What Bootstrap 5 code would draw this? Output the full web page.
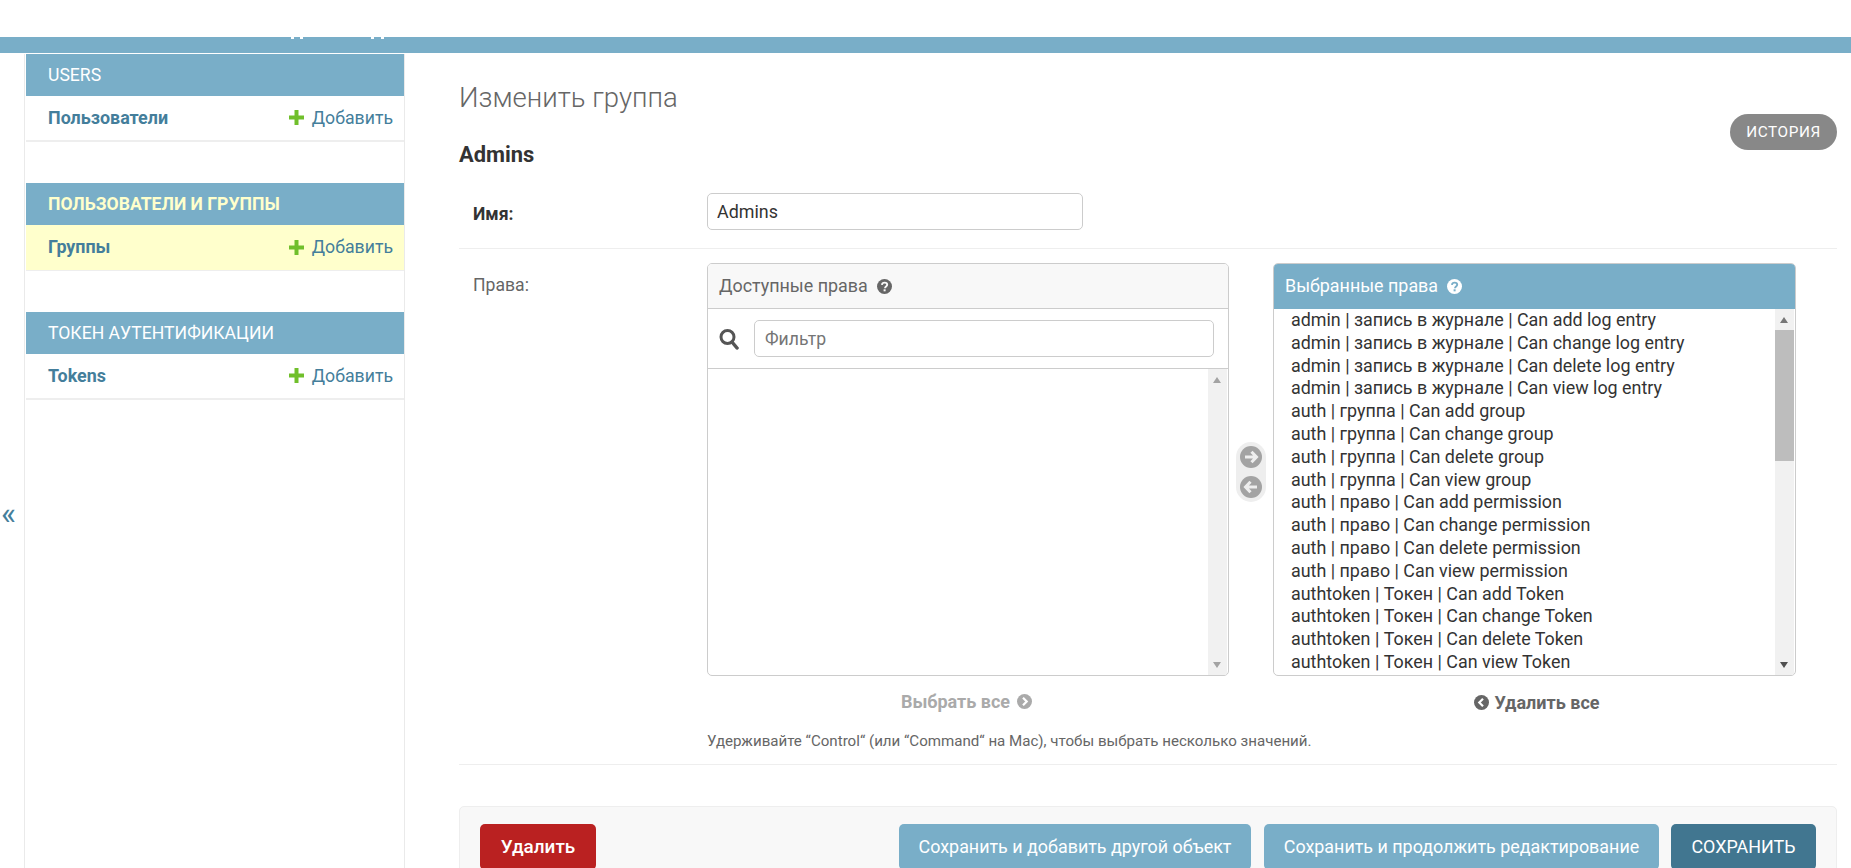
<!DOCTYPE html>
<html lang="ru">
<head>
<meta charset="UTF-8" />
<meta name="viewport" content="width=device-width, initial-scale=1" />
<title>Изменить группа</title>
<link href="https://cdn.jsdelivr.net/npm/bootstrap@5.3.0/dist/css/bootstrap.min.css" rel="stylesheet" />
<style>
  html, body { height: 868px; overflow: hidden; }
  body { font-family: Roboto, "Liberation Sans", sans-serif; color: #333; font-size: 17.6px; }
  .top-white { height: 37px; }
  .top-bar { height: 16px; background: #79aec8; position: relative; }
  .top-tick { position: absolute; top: 0; height: 2px; width: 3px; background: #fff; }
  .page-wrap { margin-top: 1px; height: 814px; }
  .toggle-col { width: 24px; color: #447e9b; font-size: 32px; line-height: 1; padding-top: 443px; padding-left: 1px; }
  .side-col { width: 381px; border-left: 1px solid #eaeaea; border-right: 1px solid #eaeaea; padding-left: 1px; }
  .app-block { margin-bottom: 41px; }
  .app-head { height: 42px; background: #79aec8; color: #fff; font-size: 17.6px; padding: 0 22px; line-height: 43px; }
  .app-head.is-active { color: #ffc; font-weight: 700; }
  .app-row { height: 46px; padding: 0 11px 0 22px; border-bottom: 2px solid #eee; }
  .app-row.is-active { background: #ffc; border-bottom-width: 1px; }
  .app-link { color: #447e9b; font-weight: 700; font-size: 17.9px; text-decoration: none; }
  .add-link { color: #447e9b; font-size: 17.7px; text-decoration: none; }
  .main-col { margin-left: 54px; width: 1378px; position: relative; }
  .page-title { font-weight: 300; font-size: 27.5px; color: #666; line-height: 32px; margin: 28px 0 0 0; }
  .hist-btn { position: absolute; right: 0; top: 60px; width: 107px; height: 36px; border-radius: 18px; background: #888; color: #fff; font-size: 15.3px; letter-spacing: .6px; line-height: 36px; text-align: center; text-decoration: none; }
  .obj-title { font-weight: 700; font-size: 21.9px; color: #333; line-height: 26px; margin: 28px 0 0 0; }
  .form-line { border-bottom: 1px solid #eee; padding-left: 14px; }
  .name-line { height: 81px; padding-top: 25px; }
  .name-label { width: 234px; font-weight: 700; color: #333; padding-top: 8px; }
  .name-input { width: 376px; height: 37px; border: 1px solid #ccc; border-radius: 5px; font-size: 17.9px; color: #333; padding: 0 9px; font-family: inherit; }
  .perm-line { height: 516px; padding-top: 14px; }
  .perm-label { width: 234px; color: #666; padding-top: 9px; }
  .sel-box { width: 522px; }
  .sel-box.is-right { width: 523px; }
  .sel-frame { border: 1px solid #ccc; border-radius: 5px; height: 413px; overflow: hidden; display: flex; flex-direction: column; }
  .sel-head { height: 45px; flex: none; padding: 0 11px; background: #f8f8f8; color: #666; font-size: 17.9px; border-bottom: 1px solid #ccc; gap: 9px; }
  .sel-head.is-chosen { background: #79aec8; color: #fff; border-bottom: 0; }
  .filter-row { height: 60px; flex: none; border-bottom: 1px solid #ccc; padding: 0 14px 0 11px; gap: 15px; }
  .filter-input { height: 37px; border: 1px solid #ccc; border-radius: 5px; flex: 1; padding: 0 10px; font-size: 17.6px; font-family: inherit; color: #333; }
  .filter-input::placeholder { color: #757575; }
  .opt-area { flex: 1; min-height: 0; }
  .opt-list { flex: 1; padding: 0 0 0 17px; font-size: 17.9px; line-height: 22.8px; color: #333; white-space: nowrap; }
  .fake-scroll { width: 19px; background: #f1f1f1; margin-right: 1px; position: relative; }
  .fake-thumb { position: absolute; left: 0; right: 0; top: 21px; height: 131px; background: #bdbdbd; }
  .arr-up, .arr-down { position: absolute; left: 5px; width: 0; height: 0; border-left: 4.5px solid transparent; border-right: 4.5px solid transparent; }
  .arr-up { top: 8px; border-bottom: 6px solid #a3a3a3; }
  .arr-down { bottom: 7px; border-top: 6px solid #a3a3a3; }
  .is-chosen-list .arr-up { border-bottom-color: #777; }
  .is-chosen-list .arr-down { border-top-color: #505050; }
  .mid-col { width: 44px; }
  .arrow-pill { width: 30px; height: 60px; background: #eee; border-radius: 15px; margin-top: 179px; margin-left: -1px; gap: 8px; }
  .all-link { font-weight: 700; font-size: 18px; text-decoration: none; height: 50px; }
  .all-link.is-off { color: #aaa; gap: 7px; padding-right: 3px; }
  .all-link.is-on { color: #666; gap: 5px; padding-left: 5px; padding-top: 2px; }
  .help-txt { font-size: 15.1px; color: #666; margin-top: 5px; line-height: 20px; margin-left: 234px; }
  .submit-box { margin-top: 41px; height: 90px; background: #f8f8f8; border: 1px solid #eee; border-radius: 5px; padding: 17px 20px 0 20px; }
  .sub-btn { height: 46px; border: 0; border-radius: 5px; color: #fff; font-size: 17.9px; padding: 0; background: #79aec8; }
  .sub-btn:hover { color: #fff; background: #79aec8; }
  .btn-del { width: 116px; background: #ba2121; font-weight: 500; font-size: 18.9px; }
  .btn-del:hover { background: #ba2121; }
  .btn-more { width: 352px; margin-right: 1px; }
  .btn-cont { width: 395px; }
  .btn-save { width: 145px; background: #417690; }
  .btn-save:hover { background: #417690; }
</style>
</head>
<body>

<div class="top-white"></div>
<div class="top-bar">
  <span class="top-tick" style="left:291px"></span>
  <span class="top-tick" style="left:300px"></span>
  <span class="top-tick" style="left:371px"></span>
  <span class="top-tick" style="left:381px"></span>
</div>

<div class="page-wrap d-flex">
  <div class="toggle-col">«</div>

  <!-- Боковая панель -->
  <div class="side-col flex-shrink-0">
    <div class="app-block">
      <div class="app-head">USERS</div>
      <div class="app-row d-flex justify-content-between align-items-center">
        <a href="#" class="app-link">Пользователи</a>
        <a href="#" class="add-link d-flex align-items-center gap-2"><svg width="15" height="15" viewBox="0 0 15 15"><path d="M5.5 0h4v5.5H15v4H9.500V15h-4V9.500H0v-4h5.500z" fill="#70bf2b"/></svg>Добавить</a>
      </div>
    </div>
    <div class="app-block">
      <div class="app-head is-active">ПОЛЬЗОВАТЕЛИ И ГРУППЫ</div>
      <div class="app-row is-active d-flex justify-content-between align-items-center">
        <a href="#" class="app-link">Группы</a>
        <a href="#" class="add-link d-flex align-items-center gap-2"><svg width="15" height="15" viewBox="0 0 15 15"><path d="M5.5 0h4v5.5H15v4H9.500V15h-4V9.500H0v-4h5.500z" fill="#70bf2b"/></svg>Добавить</a>
      </div>
    </div>
    <div class="app-block">
      <div class="app-head">ТОКЕН АУТЕНТИФИКАЦИИ</div>
      <div class="app-row d-flex justify-content-between align-items-center">
        <a href="#" class="app-link">Tokens</a>
        <a href="#" class="add-link d-flex align-items-center gap-2"><svg width="15" height="15" viewBox="0 0 15 15"><path d="M5.5 0h4v5.5H15v4H9.500V15h-4V9.500H0v-4h5.500z" fill="#70bf2b"/></svg>Добавить</a>
      </div>
    </div>
  </div>

  <!-- Форма -->
  <div class="main-col">
    <div class="page-title">Изменить группа</div>
    <a href="#" class="hist-btn">ИСТОРИЯ</a>
    <div class="obj-title">Admins</div>

    <div class="form-line name-line d-flex">
      <div class="name-label">Имя:</div>
      <input type="text" class="name-input" value="Admins" />
    </div>

    <div class="form-line perm-line">
      <div class="d-flex">
        <div class="perm-label">Права:</div>

        <div class="sel-box">
          <div class="sel-frame">
            <div class="sel-head d-flex align-items-center">Доступные права
              <svg width="15" height="15" viewBox="0 0 15 15"><circle cx="7.500" cy="7.500" r="7.500" fill="#666"/><path d="M4.900 5.800c.2-1.500 1.300-2.200 2.700-2.200 1.500 0 2.600.9 2.600 2.100 0 1.800-2.200 1.900-2.200 3.500" fill="none" stroke="#f8f8f8" stroke-width="1.900"/><rect x="6.600" y="10.300" width="2" height="2" fill="#f8f8f8"/></svg>
            </div>
            <div class="filter-row d-flex align-items-center">
              <svg width="20" height="22" viewBox="0 0 20 22"><circle cx="8.500" cy="9" r="6.500" fill="none" stroke="#555" stroke-width="3"/><path d="M13 14l5 6" stroke="#555" stroke-width="3.500" stroke-linecap="round"/></svg>
              <input type="text" class="filter-input" placeholder="Фильтр" />
            </div>
            <div class="opt-area d-flex">
              <div class="opt-list"></div>
              <div class="fake-scroll"><span class="arr-up"></span><span class="arr-down"></span></div>
            </div>
          </div>
          <a href="#" class="all-link is-off d-flex align-items-center justify-content-center">Выбрать все
            <svg width="15" height="15" viewBox="0 0 15 15"><circle cx="7.500" cy="7.500" r="7.500" fill="#aaa"/><path d="M6 3.800l3.700 3.700L6 11.200" fill="none" stroke="#fff" stroke-width="2.200"/></svg>
          </a>
        </div>

        <div class="mid-col d-flex justify-content-center flex-shrink-0">
          <div class="arrow-pill d-flex flex-column align-items-center justify-content-center">
            <svg width="22" height="22" viewBox="0 0 22 22"><circle cx="11" cy="11" r="11" fill="#a3a3a3"/><path d="M5 11h11M11.500 5.800L16.500 11l-5 5.200" fill="none" stroke="#eee" stroke-width="3"/></svg>
            <svg width="22" height="22" viewBox="0 0 22 22"><circle cx="11" cy="11" r="11" fill="#a3a3a3"/><path d="M17 11H6M10.500 5.800L5.500 11l5 5.200" fill="none" stroke="#eee" stroke-width="3"/></svg>
          </div>
        </div>

        <div class="sel-box is-right">
          <div class="sel-frame">
            <div class="sel-head is-chosen d-flex align-items-center">Выбранные права
              <svg width="15" height="15" viewBox="0 0 15 15"><circle cx="7.500" cy="7.500" r="7.500" fill="#fff"/><path d="M4.900 5.800c.2-1.500 1.300-2.200 2.700-2.200 1.500 0 2.600.9 2.600 2.100 0 1.800-2.200 1.900-2.200 3.500" fill="none" stroke="#79aec8" stroke-width="1.900"/><rect x="6.600" y="10.300" width="2" height="2" fill="#79aec8"/></svg>
            </div>
            <div class="opt-area d-flex is-chosen-list">
              <div class="opt-list" id="chosen-list"></div>
              <div class="fake-scroll"><span class="arr-up"></span><span class="fake-thumb"></span><span class="arr-down"></span></div>
            </div>
          </div>
          <a href="#" class="all-link is-on d-flex align-items-center justify-content-center">
            <svg width="15" height="15" viewBox="0 0 15 15"><circle cx="7.500" cy="7.500" r="7.500" fill="#666"/><path d="M9 3.800L5.300 7.500 9 11.200" fill="none" stroke="#fff" stroke-width="2.200"/></svg>
            Удалить все
          </a>
        </div>
      </div>
      <div class="help-txt">Удерживайте “Control“ (или “Command“ на Mac), чтобы выбрать несколько значений.</div>
    </div>

    <div class="submit-box d-flex justify-content-between">
      <a href="#" class="btn sub-btn btn-del d-flex align-items-center justify-content-center">Удалить</a>
      <div class="d-flex" style="gap:12px">
        <button type="button" class="btn sub-btn btn-more">Сохранить и добавить другой объект</button>
        <button type="button" class="btn sub-btn btn-cont">Сохранить и продолжить редактирование</button>
        <button type="button" class="btn sub-btn btn-save">СОХРАНИТЬ</button>
      </div>
    </div>
  </div>
</div>

<script>
  const perms = [
    "admin | запись в журнале | Can add log entry",
    "admin | запись в журнале | Can change log entry",
    "admin | запись в журнале | Can delete log entry",
    "admin | запись в журнале | Can view log entry",
    "auth | группа | Can add group",
    "auth | группа | Can change group",
    "auth | группа | Can delete group",
    "auth | группа | Can view group",
    "auth | право | Can add permission",
    "auth | право | Can change permission",
    "auth | право | Can delete permission",
    "auth | право | Can view permission",
    "authtoken | Токен | Can add Token",
    "authtoken | Токен | Can change Token",
    "authtoken | Токен | Can delete Token",
    "authtoken | Токен | Can view Token"
  ];
  const chosenList = document.getElementById('chosen-list');
  perms.forEach(p => {
    const d = document.createElement('div');
    d.textContent = p;
    chosenList.appendChild(d);
  });
</script>
<script src="https://cdn.jsdelivr.net/npm/bootstrap@5.3.0/dist/js/bootstrap.bundle.min.js"></script>
</body>
</html>
